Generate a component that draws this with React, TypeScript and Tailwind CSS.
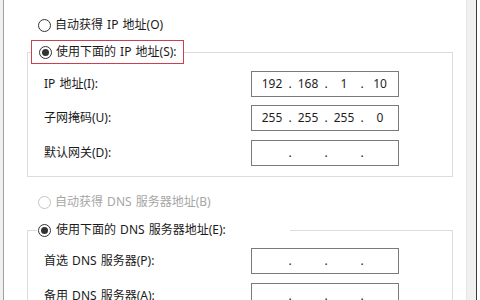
import { Fragment } from "react";

const FONT = "font-['Noto_Sans','Noto_Sans_CJK_SC',sans-serif] [word-spacing:1px]";

function Radio({ checked, disabled }: { checked?: boolean; disabled?: boolean }) {
  return (
    <span
      className={`flex h-[13px] w-[13px] shrink-0 items-center justify-center rounded-full border bg-white ${
        disabled ? "border-[#c4c4c4]" : "border-[#333333]"
      }`}
    >
      {checked && <span className="h-[7px] w-[7px] rounded-full bg-[#333333]" />}
    </span>
  );
}

function IpBox({ parts }: { parts?: string[] }) {
  const p = parts ?? ["", "", "", ""];
  return (
    <div className="flex h-[26px] w-[148px] items-center border border-[#7a7a7a] bg-white pl-[4px] text-[12px] text-[#1e1e1e]">
      {p.map((v, i) => (
        <Fragment key={i}>
          {i > 0 && <span className="w-[4px] text-center">.</span>}
          <span className="w-[32px] text-center">{v}</span>
        </Fragment>
      ))}
    </div>
  );
}

function Row({ label, parts, className = "" }: { label: string; parts?: string[]; className?: string }) {
  return (
    <div className={`flex items-center pl-[16px] ${className}`}>
      <span className="w-[207px] text-[12px] text-[#1a1a1a]">{label}</span>
      <IpBox parts={parts} />
    </div>
  );
}

export default function App() {
  return (
    <div className={`flex h-[300px] w-[480px] overflow-hidden bg-white ${FONT}`}>
      <div className="w-[3px] shrink-0 bg-[#f0f0f0]" />
      <div className="w-[1px] shrink-0 bg-[#a0a0a0]" />

      <div className="flex flex-1 flex-col pt-[16px]">
        <div className="ml-[34px] flex h-[20px] items-center gap-[4px] text-[12px] text-[#1a1a1a]">
          <Radio />
          <span>自动获得 IP 地址(O)</span>
        </div>

        <fieldset className="ml-[23px] mt-[6px] w-[426px] border border-[#dcdcdc] px-0 pb-[10px]">
          <legend className="ml-[3px] h-[24px] w-[153px] border border-[#c9414f] pl-[7px]">
            <div className="flex h-full items-center gap-[4px] text-[12px] text-[#1a1a1a]">
              <Radio checked />
              <span>使用下面的 IP 地址(S):</span>
            </div>
          </legend>
          <Row label="IP 地址(I):" parts={["192", "168", "1", "10"]} className="mt-[7px]" />
          <Row label="子网掩码(U):" parts={["255", "255", "255", "0"]} className="mt-[8px]" />
          <Row label="默认网关(D):" className="mt-[9px]" />
        </fieldset>

        <div className="ml-[34px] mt-[16px] flex h-[20px] items-center gap-[4px] text-[12px] text-[#a6a6a6]">
          <Radio disabled />
          <span>自动获得 DNS 服务器地址(B)</span>
        </div>

        <fieldset className="ml-[23px] mt-[7px] w-[426px] border border-[#dcdcdc] px-0 pb-[10px]">
          <legend className="ml-[9px] h-[24px] w-[253px] pl-[1px]">
            <div className="flex h-full items-center gap-[5px] text-[12px] text-[#1a1a1a]">
              <Radio checked />
              <span>使用下面的 DNS 服务器地址(E):</span>
            </div>
          </legend>
          <Row label="首选 DNS 服务器(P):" className="mt-[6px]" />
          <Row label="备用 DNS 服务器(A):" className="mt-[9px]" />
        </fieldset>
      </div>

      <div className="w-[10px] shrink-0 border-l border-[#e6e6e6] bg-[#f0f0f0]" />
      <div className="w-[1px] shrink-0 bg-[#3a3a3a]" />
      <div className="w-[3px] shrink-0 bg-white" />
    </div>
  );
}
